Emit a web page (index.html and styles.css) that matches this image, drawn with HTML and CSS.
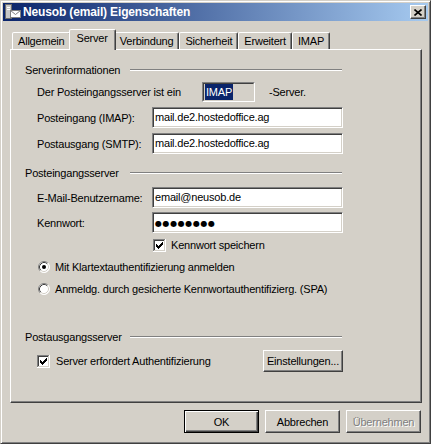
FILE: index.html
```html
<!DOCTYPE html>
<html>
<head lang="de">
    <meta charset="UTF-8">
    <title>Neusob (email) Eigenschaften</title>
    <link rel="stylesheet" href="styles.css">
</head>
<body>
<div class="window">
    <div class="titlebar">
        <svg class="app-icon" width="16" height="16" viewBox="0 0 16 16">
            <rect x="0.5" y="0.5" width="6" height="14" fill="#c8c8c8" stroke="#6c6c6c"/>
            <rect x="2" y="3" width="3" height="1" fill="#fff"/>
            <rect x="2" y="5" width="3" height="1" fill="#fff"/>
            <rect x="5.5" y="6.5" width="10" height="7" fill="#fff" stroke="#808080"/>
            <path d="M5.5 6.5 L10.5 10.5 L15.5 6.5" fill="none" stroke="#808080"/>
        </svg>
        <span class="title">Neusob (email) Eigenschaften</span>
        <span class="close-btn">
            <svg width="8" height="7" viewBox="0 0 8 7">
                <path d="M0.5 0.5 L7.5 6.5 M7.5 0.5 L0.5 6.5" stroke="#000" stroke-width="1.6" fill="none"/>
            </svg>
        </span>
    </div>

    <div class="client">
        <div class="tabs">
            <div class="tab">Allgemein</div>
            <div class="tab selected">Server</div>
            <div class="tab">Verbindung</div>
            <div class="tab">Sicherheit</div>
            <div class="tab">Erweitert</div>
            <div class="tab">IMAP</div>
        </div>

        <div class="panel">
            <div class="group-head">
                <span class="group-label">Serverinformationen</span>
                <i class="etch"></i>
            </div>

            <div class="row server-type">
                <span class="type-label">Der Posteingangsserver ist ein</span>
                <span class="readonly"><span class="readonly-inner"><span class="selection">IMAP</span></span></span>
                <span class="type-suffix">-Server.</span>
            </div>

            <div class="row field-row">
                <span class="field-label">Posteingang (IMAP):</span>
                <span class="field">mail.de2.hostedoffice.ag</span>
            </div>

            <div class="row field-row">
                <span class="field-label">Postausgang (SMTP):</span>
                <span class="field">mail.de2.hostedoffice.ag</span>
            </div>

            <div class="group-head group-2">
                <span class="group-label">Posteingangsserver</span>
                <i class="etch"></i>
            </div>

            <div class="row field-row user-row">
                <span class="field-label">E-Mail-Benutzername:</span>
                <span class="field">email@neusob.de</span>
            </div>

            <div class="row field-row pass-row">
                <span class="field-label">Kennwort:</span>
                <span class="field"><span class="dots">●●●●●●●●</span></span>
            </div>

            <div class="row check-row save-pass">
                <svg class="checkbox" width="13" height="13" viewBox="0 0 13 13">
                    <rect width="13" height="13" fill="#fff"/>
                    <path d="M0 0h12v1H1v11H0z" fill="#808080"/>
                    <path d="M1 1h10v1H2v9H1z" fill="#404040"/>
                    <path d="M12 0h1v13H0v-1h12z" fill="#fff"/>
                    <path d="M11 1h1v11H1v-1h10z" fill="#d4d0c8"/>
                    <path d="M3 5h1v3H3z M4 6h1v3H4z M5 7h1v3H5z M6 6h1v3H6z M7 5h1v3H7z M8 4h1v3H8z M9 3h1v3H9z" fill="#000"/>
                </svg>
                <span>Kennwort speichern</span>
            </div>

            <div class="row radio-row first-radio">
                <svg class="radio" width="12" height="12" viewBox="0 0 12 12">
                    <circle cx="6" cy="6" r="5.5" fill="#fff"/>
                    <path d="M2.11 9.89 A5.5 5.5 0 0 1 9.89 2.11" stroke="#808080" fill="none"/>
                    <path d="M9.89 2.11 A5.5 5.5 0 0 1 2.11 9.89" stroke="#fff" fill="none"/>
                    <path d="M2.82 9.18 A4.5 4.5 0 0 1 9.18 2.82" stroke="#404040" fill="none"/>
                    <path d="M9.18 2.82 A4.5 4.5 0 0 1 2.82 9.18" stroke="#d4d0c8" fill="none"/>
                    <circle cx="6" cy="6" r="2" fill="#000"/>
                </svg>
                <span>Mit Klartextauthentifizierung anmelden</span>
            </div>

            <div class="row radio-row">
                <svg class="radio" width="12" height="12" viewBox="0 0 12 12">
                    <circle cx="6" cy="6" r="5.5" fill="#fff"/>
                    <path d="M2.11 9.89 A5.5 5.5 0 0 1 9.89 2.11" stroke="#808080" fill="none"/>
                    <path d="M9.89 2.11 A5.5 5.5 0 0 1 2.11 9.89" stroke="#fff" fill="none"/>
                    <path d="M2.82 9.18 A4.5 4.5 0 0 1 9.18 2.82" stroke="#404040" fill="none"/>
                    <path d="M9.18 2.82 A4.5 4.5 0 0 1 2.82 9.18" stroke="#d4d0c8" fill="none"/>
                </svg>
                <span>Anmeldg. durch gesicherte Kennwortauthentifizierg. (SPA)</span>
            </div>

            <div class="group-head group-3">
                <span class="group-label">Postausgangsserver</span>
                <i class="etch"></i>
            </div>

            <div class="row auth-row">
                <span class="check-label">
                    <svg class="checkbox" width="13" height="13" viewBox="0 0 13 13">
                        <rect width="13" height="13" fill="#fff"/>
                        <path d="M0 0h12v1H1v11H0z" fill="#808080"/>
                        <path d="M1 1h10v1H2v9H1z" fill="#404040"/>
                        <path d="M12 0h1v13H0v-1h12z" fill="#fff"/>
                        <path d="M11 1h1v11H1v-1h10z" fill="#d4d0c8"/>
                        <path d="M3 5h1v3H3z M4 6h1v3H4z M5 7h1v3H5z M6 6h1v3H6z M7 5h1v3H7z M8 4h1v3H8z M9 3h1v3H9z" fill="#000"/>
                    </svg>
                    <span>Server erfordert Authentifizierung</span>
                </span>
                <span class="button settings">Einstellungen...</span>
            </div>
        </div>

        <div class="actions">
            <span class="button default">OK</span>
            <span class="button">Abbrechen</span>
            <span class="button disabled">Übernehmen</span>
        </div>
    </div>
</div>
</body>
</html>
```

FILE: styles.css
```css
* {
    box-sizing: border-box;
}

html, body {
    margin: 0;
    padding: 0;
}

body {
    width: 431px;
    height: 444px;
    overflow: hidden;
    background: #d4d0c8;
    font-family: "Liberation Sans", Arial, sans-serif;
    font-size: 11px;
    letter-spacing: -0.2px;
    color: #000;
}

.window {
    width: 431px;
    height: 444px;
    padding: 2px;
    background: #d4d0c8;
    border: 1px solid;
    border-color: #d4d0c8 #404040 #404040 #d4d0c8;
    box-shadow: inset 1px 1px #fff, inset -1px -1px #808080;
}

/* title bar */
.titlebar {
    display: flex;
    align-items: center;
    height: 18px;
    padding: 0 2px;
    background: linear-gradient(to right, #0a246a, #a6caf0);
}

.app-icon {
    display: block;
    margin-right: 2px;
}

.title {
    color: #fff;
    font-weight: bold;
    font-size: 12px;
    letter-spacing: -0.15px;
}

.close-btn {
    display: flex;
    align-items: center;
    justify-content: center;
    width: 16px;
    height: 14px;
    margin-left: auto;
    background: #d4d0c8;
    border: 1px solid;
    border-color: #fff #404040 #404040 #fff;
    box-shadow: inset -1px -1px #808080;
}

.close-btn svg {
    display: block;
}

/* client area */
.client {
    height: 418px;
    padding: 8px 6px 0 7px;
}

.tabs {
    display: flex;
    align-items: flex-end;
    height: 20px;
    margin-left: 2px;
    position: relative;
    z-index: 1;
}

.tab {
    height: 17px;
    padding: 0 5px;
    line-height: 16px;
    border: 1px solid;
    border-bottom: none;
    border-color: #fff #404040 transparent #fff;
    border-radius: 2px 2px 0 0;
    box-shadow: inset -1px 0 #808080;
    background: #d4d0c8;
    white-space: nowrap;
}

.tab.selected {
    height: 21px;
    margin: 0 -2px -1px;
    padding: 0 7px;
    position: relative;
    z-index: 2;
}

.panel {
    width: 412px;
    height: 354px;
    padding: 13px 0 0 14px;
    border: 1px solid;
    border-color: #fff #404040 #404040 #fff;
    box-shadow: inset -1px -1px #808080;
}

/* group headings */
.group-head {
    display: flex;
    align-items: center;
    height: 14px;
    line-height: 14px;
}

.group-label {
    width: 105px;
}

.etch {
    display: block;
    width: 212px;
    height: 2px;
    border-top: 1px solid #808080;
    border-bottom: 1px solid #fff;
    margin-top: -1px;
}

.group-2 {
    margin-top: 12px;
}

.group-3 {
    margin-top: 33px;
}

/* rows */
.row {
    display: flex;
    align-items: center;
    margin-left: 12px;
    width: 306px;
}

.server-type {
    height: 20px;
    margin-top: 5px;
}

.type-label {
    width: 165px;
}

.readonly {
    display: block;
    width: 53px;
    height: 20px;
    border: 1px solid;
    border-color: #808080 #fff #fff #808080;
}

.readonly-inner {
    display: block;
    height: 100%;
    border: 1px solid;
    border-color: #404040 #d4d0c8 #d4d0c8 #404040;
}

.selection {
    display: inline-block;
    height: 16px;
    line-height: 16px;
    padding: 0 1px;
    margin-left: 1px;
    background: #0a246a;
    color: #fff;
}

.type-suffix {
    margin-left: 14px;
}

.field-row {
    height: 21px;
    margin-top: 5px;
}

.user-row {
    margin-top: 7px;
}

.pass-row {
    margin-top: 4px;
}

.field-label {
    width: 115px;
}

.field {
    display: block;
    width: 191px;
    height: 21px;
    padding: 0 2px;
    line-height: 19px;
    background: #fff;
    border: 1px solid;
    border-color: #808080 #fff #fff #808080;
    box-shadow: inset 1px 1px #404040, inset -1px -1px #d4d0c8;
    white-space: nowrap;
}

.dots {
    font-family: "DejaVu Sans", sans-serif;
    font-size: 8px;
    letter-spacing: 0.6px;
}

.checkbox, .radio {
    display: block;
    flex: none;
}

.check-row {
    height: 14px;
    margin-top: 5px;
    padding-left: 116px;
    gap: 5px;
}

.radio-row {
    height: 16px;
    margin-top: 6px;
    margin-left: 13px;
    gap: 5px;
}

.first-radio {
    margin-top: 7px;
}

.auth-row {
    height: 22px;
    margin-top: 6px;
    justify-content: space-between;
}

.check-label {
    display: flex;
    align-items: center;
    gap: 6px;
}

/* buttons */
.button {
    display: flex;
    align-items: center;
    justify-content: center;
    width: 75px;
    height: 23px;
    background: #d4d0c8;
    border: 1px solid;
    border-color: #fff #404040 #404040 #fff;
    box-shadow: inset -1px -1px #808080;
    white-space: nowrap;
}

.button.settings {
    width: 80px;
    height: 22px;
}

.button.default {
    border-color: #000;
    box-shadow: inset 1px 1px #fff, inset -1px -1px #404040, inset -2px -2px #808080;
}

.button.disabled {
    color: #808080;
    text-shadow: 1px 1px #fff;
}

.actions {
    display: flex;
    justify-content: flex-end;
    gap: 6px;
    margin-top: 7px;
    padding-right: 1px;
}
```
